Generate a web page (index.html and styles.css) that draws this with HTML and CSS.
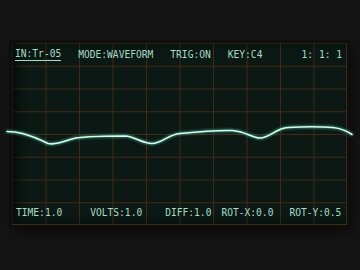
FILE: index.html
```html
<!DOCTYPE html>
<html lang="en">
  <head>
    <meta charset="UTF-8" />
    <title>Scope</title>
    <link rel="stylesheet" href="styles.css">
  </head>
  <body>
    <div class="scope">
      <div class="screen">
        <div class="bar bar-top">
          <span class="item input">IN:Tr-05</span>
          <span class="item">MODE:WAVEFORM</span>
          <span class="item">TRIG:ON</span>
          <span class="item">KEY:C4</span>
          <span class="item pos">1: 1: 1</span>
        </div>
        <div class="bar bar-bottom">
          <span class="item time">TIME:1.0</span>
          <span class="item volts">VOLTS:1.0</span>
          <span class="item diff">DIFF:1.0</span>
          <span class="item rotx">ROT-X:0.0</span>
          <span class="item roty">ROT-Y:0.5</span>
        </div>
      </div>
      <svg class="wave" viewBox="0 0 360 270" width="360" height="270">
        <path d="M7,131.5 C16,131.5 26,133 48,143.5 C60,146 68,138 80,137.5 C95,136 110,136 125,136 C135,136.5 142,143.5 152,143.5 C162,143.5 168,134.5 180,133.5 C195,132 215,130 232,130.5 C245,131 252,138 260,138 C270,138 276,128 288,127.5 C305,126.5 320,126.5 333,127.5 C342,128.5 347,131 352,134.5" />
      </svg>
    </div>
  </body>
</html>
```

FILE: styles.css
```css
* {
  box-sizing: border-box;
}

body {
  margin: 0;
  background: #141414;
  font-family: "DejaVu Sans Mono", "Liberation Mono", monospace;
}

.scope {
  position: relative;
  width: 360px;
  height: 270px;
  padding: 43px 0 0 12px;
}

.screen {
  width: 335px;
  height: 182px;
  display: flex;
  flex-direction: column;
  justify-content: space-between;
  background-color: #0b1814;
  background-image:
    linear-gradient(to right, #3f2a15 1px, transparent 1px),
    linear-gradient(to bottom, #3f2a15 1px, transparent 1px);
  background-size: 33.5px 22.75px;
  background-position: 0 0;
  border-right: 1px solid #3f2a15;
  border-bottom: 1px solid #3f2a15;
  box-shadow: 0 0 0 3px #0c0f0d, 3px 5px 10px #060606, inset 6px 0 10px rgba(0, 0, 0, 0.55);
  color: #a8dcc4;
  font-size: 9.6px;
  line-height: 1;
}

.bar {
  display: flex;
  align-items: center;
  white-space: pre;
}

.bar-top {
  height: 24px;
  padding: 0 4px 0 3px;
  gap: 17px;
}

.input {
  padding-bottom: 1px;
  border-bottom: 1px solid #a8dcc4;
}

.pos {
  margin-left: auto;
}

.bar-bottom {
  height: 22px;
  padding: 0 4px 0 4px;
}

.volts {
  margin-left: 28px;
}

.diff {
  margin-left: 23px;
}

.rotx {
  margin-left: 10px;
}

.roty {
  margin-left: 16px;
}

.wave {
  position: absolute;
  top: 0;
  left: 0;
  filter: drop-shadow(0 0 1.5px #5fe0c0);
}

.wave path {
  fill: none;
  stroke: #d4fff0;
  stroke-width: 1.6;
  stroke-linecap: round;
}
```
